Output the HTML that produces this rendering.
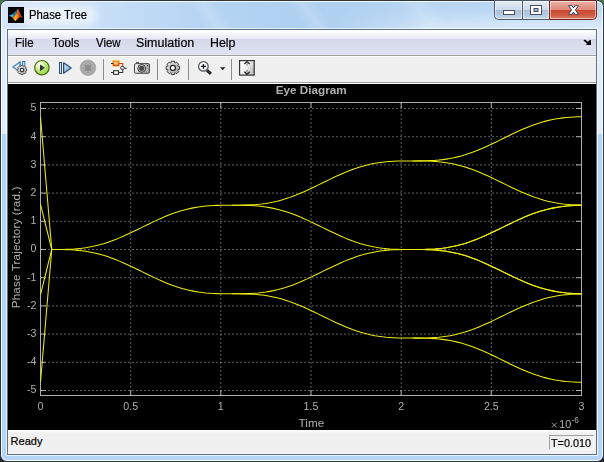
<!DOCTYPE html>
<html><head><meta charset="utf-8"><title>Phase Tree</title>
<style>
html,body{margin:0;padding:0;}
body{width:604px;height:462px;overflow:hidden;position:relative;background:linear-gradient(#44784d 0,#44784d 50%,#20262a 50%,#20262a 100%);font-family:"Liberation Sans",sans-serif;}
.abs{position:absolute;}
#title,.mi,#ready,#ttext{-webkit-text-stroke:0.2px #000;}
#win{left:0;top:0;width:604px;height:462px;box-sizing:border-box;border-radius:7px 7px 7px 7px;border:1px solid #2b3642;background:#b5d5f6;overflow:hidden;}
#hl{left:0;top:0;width:600px;height:458px;border:1px solid rgba(255,255,255,.85);border-radius:6px;}
#titlegrad{left:1px;top:1px;width:600px;height:28px;background:linear-gradient(to right,#d6e5f9 0,#cfe2f8 60px,#c6def7 110px,#b5d4f3 200px,#aed0f1 300px,#b2d3f2 420px,#b9d7f5 600px);}
#sideL{left:1px;top:28px;width:6px;height:105px;background:#e2edfb;}
#sideR{left:596px;top:28px;width:6px;height:105px;background:#e2edfb;}
.streak{background:linear-gradient(to right,rgba(255,255,255,0),rgba(255,255,255,.16),rgba(255,255,255,0));transform:skewX(35deg);top:0;height:30px;}
#inner{left:7px;top:29px;width:588px;height:424px;border:1px solid #5f6f82;background:#f0f0f0;}
#innerhl{left:6px;top:28px;width:590px;height:426px;border:1px solid rgba(255,255,255,.7);}
#title{left:28.8px;top:8px;transform:scaleX(.945);transform-origin:left;font-size:12px;line-height:14px;color:#000;white-space:nowrap;}
#menubar{left:8px;top:30px;width:588px;height:25px;background:linear-gradient(#ffffff 0,#f9fafd 3px,#eff1f8 6px,#e6e9f5 9px,#d5d9eb 9px,#d8dcec 16px,#dfe3f1 24px,#e4e8f7 25px);}
#menuline{left:8px;top:55px;width:588px;height:1px;background:#a0a0a0;}
#menuline2{left:8px;top:56px;width:588px;height:1px;background:#f6f6f6;}
.mi{top:36px;transform-origin:left;font-size:12px;line-height:14px;color:#000;white-space:nowrap;}
#toolbar{left:8px;top:56px;width:588px;height:26px;background:linear-gradient(#ffffff 0,#ffffff 1px,#f0f0f0 1px);}
#tbline{left:8px;top:82px;width:588px;height:1px;background:#a0a0a0;}
#tbline2{left:8px;top:83px;width:588px;height:1px;background:#ffffff;}
.sep{top:59px;width:1px;height:21px;background:#8c8c8c;}
#plot{left:8px;top:84px;width:588px;height:346px;background:#000;}
#status{left:8px;top:430px;width:588px;height:24px;background:linear-gradient(#fff 0,#fff 1px,#f6f6f6 2px,#f0f0f0 3px,#f0f0f0 22.5px,#f7f7f7 24px);}
#ready{left:10.6px;top:435px;font-size:11px;line-height:13px;color:#000;}
#tbox{left:549px;top:435px;width:43px;height:13px;border-top:1px solid #a0a0a0;border-left:1px solid #a0a0a0;border-right:1px solid #fff;border-bottom:1px solid #fff;}
#ttext{left:550.6px;top:437px;transform:scaleX(.985);transform-origin:left;font-size:11px;line-height:13px;color:#000;white-space:nowrap;}
svg text{font-family:"Liberation Sans",sans-serif;}
</style></head><body>
<div id="win" class="abs">
  <div id="titlegrad" class="abs"></div>
  <div class="abs streak" style="left:195px;width:30px;"></div>
  <div class="abs streak" style="left:295px;width:30px;"></div>
  <div class="abs streak" style="left:400px;width:45px;"></div>
  <div class="abs" style="left:330px;top:1px;width:272px;height:28px;background:linear-gradient(to bottom,rgba(255,255,255,.05) 0,rgba(255,255,255,.12) 9px,rgba(255,255,255,.5) 28px);-webkit-mask-image:linear-gradient(to right,transparent 0,#000 45%);mask-image:linear-gradient(to right,transparent 0,#000 45%);"></div>
  <div class="abs" style="left:20px;top:5px;width:76px;height:19px;border-radius:9px;background:rgba(255,255,255,.62);filter:blur(5px);"></div>
  <div id="sideL" class="abs"></div><div id="sideR" class="abs"></div>
  <div id="hl" class="abs"></div>
</div>
<div id="innerhl" class="abs"></div>
<div id="inner" class="abs"></div>

<!-- app icon -->
<svg class="abs" style="left:8px;top:7px" width="16" height="16" viewBox="0 0 16 16">
  <rect width="16" height="16" fill="#000"/>
  <path d="M1 8.5 L4.5 7 L7 8.8 L4 10.5 Z" fill="#3fa9d6"/>
  <path d="M4.5 7 L8.5 3.2 L10 1.5 L8.2 7 L7 8.8 Z" fill="#2c6f9c"/>
  <path d="M7 8.8 L8.2 7 L10 1.5 C11.2 4 12.5 8.5 14.5 11 C13 10 12 9.5 11 10.5 C10 11.8 8.5 13.5 7.5 13.8 L6 12.5 L4 10.5 Z" fill="#e8761c"/>
  <path d="M10 1.5 C11.2 4 12.5 8.5 14.5 11 C13 10 12 9.5 11 10.5 C10.8 8 10.3 5 10 1.5 Z" fill="#b5391a"/>
  <path d="M7 8.8 L8.2 7 L9 9.5 L7.5 13.8 L6 12.5 Z" fill="#f6b21a"/>
  <path d="M6.4 12.2 L7.5 13.8 L8.2 12.5 Z" fill="#f6e21a"/>
</svg>
<div id="title" class="abs">Phase Tree</div>

<!-- caption buttons -->
<svg class="abs" style="left:494px;top:0" width="104" height="21" viewBox="0 0 104 21">
  <defs>
    <linearGradient id="gb" x1="0" y1="0" x2="0" y2="1">
      <stop offset="0" stop-color="#e6edf6"/><stop offset="0.5" stop-color="#cbd9ea"/>
      <stop offset="0.5" stop-color="#a9bed8"/><stop offset="1" stop-color="#c6d6e9"/>
    </linearGradient>
    <linearGradient id="gr" x1="0" y1="0" x2="0" y2="1">
      <stop offset="0" stop-color="#f1b6aa"/><stop offset="0.48" stop-color="#de8878"/>
      <stop offset="0.48" stop-color="#c8482e"/><stop offset="0.78" stop-color="#cf5a42"/><stop offset="1" stop-color="#df8670"/>
    </linearGradient>
  </defs>
  <path d="M0.5 0.5 V15.5 Q0.5 19.5 4.5 19.5 H55.5 V0.5 Z" fill="url(#gb)" stroke="#4d5b6e"/>
  <path d="M55.5 0.5 V19.5 H98.5 Q102.5 19.5 102.5 15.5 V0.5 Z" fill="url(#gr)" stroke="#6e2a22"/>
  <path d="M1.5 1.5 V15.5 Q1.5 18.5 4.5 18.5 H27.5 V1.5 Z M29.5 1.5 V18.5 H54.5 V1.5Z M56.5 1.5 V18.5 H98.5 Q101.5 18.5 101.5 15.5 V1.5 Z" fill="none" stroke="rgba(255,255,255,.5)"/>
  <line x1="28.5" y1="1" x2="28.5" y2="19" stroke="#4d5b6e"/>
  <rect x="9.5" y="10.5" width="11" height="4" fill="#fff" stroke="#47505e"/>
  <rect x="36.5" y="5.5" width="11" height="9" fill="#fff" stroke="#47505e"/>
  <rect x="40" y="8.5" width="4" height="3" fill="#9db8d8" stroke="#47505e"/>
  <path d="M74.5 5.7 L78.0 5.7 L79.5 7.9 L81.0 5.7 L84.5 5.7 L81.4 10.0 L84.5 14.3 L81.0 14.3 L79.5 12.1 L78.0 14.3 L74.5 14.3 L77.6 10.0 Z" fill="#fff" stroke="#3a475a" stroke-width="1" stroke-linejoin="round"/>
</svg>

<div id="menubar" class="abs"></div><div id="menuline" class="abs"></div><div id="menuline2" class="abs"></div>
<div class="abs mi" style="left:15.3px;transform:scaleX(.96)">File</div>
<div class="abs mi" style="left:52px;transform:scaleX(.98)">Tools</div>
<div class="abs mi" style="left:96.3px;transform:scaleX(.95)">View</div>
<div class="abs mi" style="left:136px;transform:scaleX(1.04)">Simulation</div>
<div class="abs mi" style="left:210.2px;transform:scaleX(1.03)">Help</div>
<svg class="abs" style="left:583px;top:39px" width="9" height="7" viewBox="0 0 9 7"><path d="M0.5 1.5 L2 0.5 L5 3 L6 1.5 L8 1 L8 6 L3 6 L4 4.5 Z" fill="#000"/></svg>

<div id="toolbar" class="abs"></div><div id="tbline" class="abs"></div><div id="tbline2" class="abs"></div>
<div class="abs sep" style="left:103px"></div>
<div class="abs sep" style="left:157px"></div>
<div class="abs sep" style="left:188px"></div>
<div class="abs sep" style="left:231px"></div>

<!-- toolbar icons -->
<svg class="abs" style="left:8px;top:56px" width="260" height="26" viewBox="8 56 260 26">
  <defs>
    <radialGradient id="gplay" cx="0.3" cy="0.25" r="0.8"><stop offset="0" stop-color="#ffffff"/><stop offset="0.25" stop-color="#e4f6c4"/><stop offset="0.7" stop-color="#aee268"/><stop offset="1" stop-color="#98d848"/></radialGradient>
    <linearGradient id="gtri" x1="0" y1="0" x2="1" y2="0"><stop offset="0" stop-color="#161616"/><stop offset="1" stop-color="#5a5a5a"/></linearGradient>
    <linearGradient id="gblue" x1="0" y1="0" x2="0.6" y2="1"><stop offset="0" stop-color="#cfe6fa"/><stop offset="1" stop-color="#7fafdc"/></linearGradient>
    <linearGradient id="ggear" x1="0" y1="0" x2="0.7" y2="1"><stop offset="0" stop-color="#efefef"/><stop offset="1" stop-color="#a2a2a2"/></linearGradient>
    <linearGradient id="ggear2" x1="0" y1="0" x2="1" y2="1"><stop offset="0" stop-color="#f2f2f2"/><stop offset="1" stop-color="#9a9a9a"/></linearGradient>
    <linearGradient id="gpeach" x1="0" y1="0" x2="0" y2="1"><stop offset="0" stop-color="#fbe3b0"/><stop offset="1" stop-color="#f3a85a"/></linearGradient>
    <linearGradient id="gredbox" x1="0" y1="0" x2="0" y2="1"><stop offset="0" stop-color="#ee8a1e"/><stop offset="1" stop-color="#c8321a"/></linearGradient>
    <linearGradient id="gcam" x1="0" y1="0" x2="1" y2="0.3"><stop offset="0" stop-color="#f4f4f4"/><stop offset="0.45" stop-color="#dcdcdc"/><stop offset="1" stop-color="#a6a6a6"/></linearGradient>
    <linearGradient id="glens" x1="0" y1="0" x2="1" y2="1"><stop offset="0" stop-color="#ffffff"/><stop offset="0.5" stop-color="#fbfdff"/><stop offset="1" stop-color="#cfe2f4"/></linearGradient>
    <linearGradient id="gbox" x1="0" y1="0" x2="1" y2="0.6"><stop offset="0" stop-color="#ffffff"/><stop offset="0.45" stop-color="#f6f6f6"/><stop offset="1" stop-color="#c4c4c4"/></linearGradient>
  </defs>
  <!-- rewind + gear -->
  <path d="M12.9 67 L20.2 61.7 V72 Z" fill="#d6eafb" stroke="#4f86c0" stroke-width="1.4" stroke-linejoin="round"/>
  <rect x="22.6" y="61.5" width="2.2" height="7" fill="#d6eafb" stroke="#3670b0"/>
  <g transform="translate(22 70)">
    <path d="M-1.07 -3.86 L-0.94 -4.66 L0.94 -4.66 L1.07 -3.86 L1.97 -3.48 L2.62 -3.96 L3.96 -2.62 L3.48 -1.97 L3.86 -1.07 L4.66 -0.94 L4.66 0.94 L3.86 1.07 L3.48 1.97 L3.96 2.62 L2.62 3.96 L1.97 3.48 L1.07 3.86 L0.94 4.66 L-0.94 4.66 L-1.07 3.86 L-1.97 3.48 L-2.62 3.96 L-3.96 2.62 L-3.48 1.97 L-3.86 1.07 L-4.66 0.94 L-4.66 -0.94 L-3.86 -1.07 L-3.48 -1.97 L-3.96 -2.62 L-2.62 -3.96 L-1.97 -3.48 Z" fill="url(#ggear)" stroke="#505050" stroke-width="0.9" stroke-linejoin="round"/>
    <circle r="1.7" fill="#fff" stroke="#2a2a2a" stroke-width="1.1"/>
  </g>
  <!-- play -->
  <circle cx="41.9" cy="67.7" r="7.2" fill="url(#gplay)" stroke="#4b6c12" stroke-width="1.2"/>
  <path d="M40.1 64.4 L44.9 67.8 L40.1 71.2 Z" fill="url(#gtri)"/>
  <!-- step -->
  <rect x="59.5" y="62.5" width="2" height="11" fill="#d2e6f7" stroke="#2c4c74"/>
  <path d="M63.6 62.8 L71.2 68 L63.6 73.2 Z" fill="url(#gblue)" stroke="#2c4c74" stroke-width="1.2" stroke-linejoin="round"/>
  <!-- stop -->
  <circle cx="88" cy="67.7" r="7.8" fill="#a9a9a9" stroke="#9c9c9c" stroke-width="0.6"/>
  <rect x="85" y="64.8" width="6" height="6" fill="#8e8e8e"/>
  <!-- block diagram -->
  <rect x="112" y="60" width="8" height="6.8" rx="1.2" fill="#fbc65c"/>
  <rect x="113.6" y="61.6" width="4.9" height="3.7" fill="url(#gpeach)" stroke="url(#gredbox)" stroke-width="1.1"/>
  <path d="M111 63.5 H113.1 M111 72.5 H113.1 M124.4 68.2 H126.8" fill="none" stroke="#2a2a2a" stroke-width="1"/>
  <path d="M119 63.5 H122.7 V66.2" fill="none" stroke="#d23c1a" stroke-width="1.1"/>
  <path d="M119 72.5 H122.7 V69.6" fill="none" stroke="#333" stroke-width="1.1"/>
  <rect x="120.6" y="66.5" width="3.6" height="2.9" rx="1.3" fill="#fff" stroke="#333" stroke-width="1"/>
  <rect x="113.6" y="70.7" width="4.9" height="3.6" fill="#fbfbfb" stroke="#333" stroke-width="1.1"/>
  <!-- camera -->
  <path d="M136 62.6 H139" stroke="#555" stroke-width="1.2"/>
  <rect x="134.5" y="63.6" width="15" height="9.7" rx="1.4" fill="url(#gcam)" stroke="#484848" stroke-width="1"/>
  <circle cx="141.7" cy="68.4" r="3.9" fill="#d4d4d4" stroke="#3a3a3a" stroke-width="1"/>
  <circle cx="141.7" cy="68.4" r="2.3" fill="#4a4a4a" stroke="#2c2c2c" stroke-width="0.6"/>
  <rect x="146.9" y="64.9" width="1.2" height="1.2" fill="#333"/>
  <!-- gear -->
  <g transform="translate(172.9 67.9)">
    <path d="M-1.63 -5.25 L-1.64 -6.70 L1.64 -6.70 L1.63 -5.25 L2.57 -4.86 L3.58 -5.90 L5.90 -3.58 L4.86 -2.57 L5.25 -1.63 L6.70 -1.64 L6.70 1.64 L5.25 1.63 L4.86 2.57 L5.90 3.58 L3.58 5.90 L2.57 4.86 L1.63 5.25 L1.64 6.70 L-1.64 6.70 L-1.63 5.25 L-2.57 4.86 L-3.58 5.90 L-5.90 3.58 L-4.86 2.57 L-5.25 1.63 L-6.70 1.64 L-6.70 -1.64 L-5.25 -1.63 L-4.86 -2.57 L-5.90 -3.58 L-3.58 -5.90 L-2.57 -4.86 Z" fill="url(#ggear2)" stroke="#3c3c3c" stroke-width="1" stroke-linejoin="round"/>
    <circle r="2.5" fill="#fff" stroke="#262626" stroke-width="1.3"/>
  </g>
  <!-- zoom -->
  <path d="M207 70.4 L210.9 73.9" stroke="#262626" stroke-width="3.1" stroke-linecap="butt"/>
  <circle cx="203.4" cy="66.4" r="4.8" fill="url(#glens)" stroke="#555" stroke-width="1.2"/>
  <path d="M201 66.4 H205.9 M203.45 63.9 V68.8" stroke="#111" stroke-width="1.3"/>
  <path d="M220 67.3 H225.4 L222.7 70.2 Z" fill="#222"/>
  <!-- autoscale -->
  <rect x="239.6" y="60.6" width="14.6" height="14.5" fill="url(#gbox)" stroke="#323232" stroke-width="1.2"/>
  <path d="M247.05 63.2 V65.6 M247.05 70.1 V72.5" stroke="#8c8c8c" stroke-width="1.3"/>
  <path d="M244.4 64 L247.05 61.6 L249.7 64" fill="none" stroke="#2a2a2a" stroke-width="1.4"/>
  <path d="M244.4 71.8 L247.05 74.2 L249.7 71.8" fill="none" stroke="#2a2a2a" stroke-width="1.4"/>
</svg>

<div id="plot" class="abs"></div>
<svg class="abs" style="left:8px;top:84px;will-change:transform" width="588" height="346" viewBox="8 84 588 346">
  <g stroke="#a4a4a4" stroke-width="1" stroke-dasharray="1.15 2.85" stroke-dashoffset="0.55" fill="none">
<line x1="41" x2="581" y1="390.5" y2="390.5"/>
<line x1="41" x2="581" y1="362.3" y2="362.3"/>
<line x1="41" x2="581" y1="334.1" y2="334.1"/>
<line x1="41" x2="581" y1="305.9" y2="305.9"/>
<line x1="41" x2="581" y1="277.7" y2="277.7"/>
<line x1="41" x2="581" y1="249.5" y2="249.5"/>
<line x1="41" x2="581" y1="221.3" y2="221.3"/>
<line x1="41" x2="581" y1="193.1" y2="193.1"/>
<line x1="41" x2="581" y1="164.9" y2="164.9"/>
<line x1="41" x2="581" y1="136.7" y2="136.7"/>
<line x1="41" x2="581" y1="108.5" y2="108.5"/>
<line x1="130.7" x2="130.7" y1="103" y2="395"/>
<line x1="220.8" x2="220.8" y1="103" y2="395"/>
<line x1="311.0" x2="311.0" y1="103" y2="395"/>
<line x1="401.2" x2="401.2" y1="103" y2="395"/>
<line x1="491.3" x2="491.3" y1="103" y2="395"/>
  </g>
  <rect x="40.5" y="102.5" width="541" height="293" fill="none" stroke="#afafaf" stroke-width="1"/>
  <g stroke="#afafaf" stroke-width="1">
<line x1="41" x2="46" y1="390.5" y2="390.5"/>
<line x1="576" x2="581" y1="390.5" y2="390.5"/>
<line x1="41" x2="46" y1="362.3" y2="362.3"/>
<line x1="576" x2="581" y1="362.3" y2="362.3"/>
<line x1="41" x2="46" y1="334.1" y2="334.1"/>
<line x1="576" x2="581" y1="334.1" y2="334.1"/>
<line x1="41" x2="46" y1="305.9" y2="305.9"/>
<line x1="576" x2="581" y1="305.9" y2="305.9"/>
<line x1="41" x2="46" y1="277.7" y2="277.7"/>
<line x1="576" x2="581" y1="277.7" y2="277.7"/>
<line x1="41" x2="46" y1="249.5" y2="249.5"/>
<line x1="576" x2="581" y1="249.5" y2="249.5"/>
<line x1="41" x2="46" y1="221.3" y2="221.3"/>
<line x1="576" x2="581" y1="221.3" y2="221.3"/>
<line x1="41" x2="46" y1="193.1" y2="193.1"/>
<line x1="576" x2="581" y1="193.1" y2="193.1"/>
<line x1="41" x2="46" y1="164.9" y2="164.9"/>
<line x1="576" x2="581" y1="164.9" y2="164.9"/>
<line x1="41" x2="46" y1="136.7" y2="136.7"/>
<line x1="576" x2="581" y1="136.7" y2="136.7"/>
<line x1="41" x2="46" y1="108.5" y2="108.5"/>
<line x1="576" x2="581" y1="108.5" y2="108.5"/>
<line x1="130.7" x2="130.7" y1="103" y2="108"/>
<line x1="130.7" x2="130.7" y1="390" y2="395"/>
<line x1="220.8" x2="220.8" y1="103" y2="108"/>
<line x1="220.8" x2="220.8" y1="390" y2="395"/>
<line x1="311.0" x2="311.0" y1="103" y2="108"/>
<line x1="311.0" x2="311.0" y1="390" y2="395"/>
<line x1="401.2" x2="401.2" y1="103" y2="108"/>
<line x1="401.2" x2="401.2" y1="390" y2="395"/>
<line x1="491.3" x2="491.3" y1="103" y2="108"/>
<line x1="491.3" x2="491.3" y1="390" y2="395"/>
  </g>
  <g stroke="#ecec10" stroke-width="1.05" fill="none" stroke-linejoin="round">
<path d="M51.77 249.50 L55.53 249.50 L59.28 249.48 L63.04 249.43 L66.80 249.33 L70.56 249.18 L74.31 248.95 L78.07 248.63 L81.83 248.22 L85.58 247.71 L89.34 247.08 L93.10 246.34 L96.85 245.48 L100.61 244.49 L104.37 243.39 L108.12 242.17 L111.88 240.84 L115.64 239.40 L119.40 237.87 L123.15 236.26 L126.91 234.57 L130.67 232.82 L134.42 231.02 L138.18 229.19 L141.94 227.35 L145.69 225.51 L149.45 223.68 L153.21 221.89 L156.97 220.14 L160.72 218.45 L164.48 216.83 L168.24 215.30 L171.99 213.86 L175.75 212.53 L179.51 211.31 L183.26 210.21 L187.02 209.23 L190.78 208.37 L194.53 207.62 L198.29 207.00 L202.05 206.48 L205.81 206.07 L209.56 205.76 L213.32 205.53 L217.08 205.37 L220.83 205.27 L224.59 205.22 L228.35 205.21 L232.10 205.20"/>
<path d="M232.10 205.20 L235.86 205.20 L239.62 205.18 L243.38 205.13 L247.13 205.04 L250.89 204.88 L254.65 204.65 L258.40 204.34 L262.16 203.93 L265.92 203.41 L269.67 202.78 L273.43 202.04 L277.19 201.18 L280.94 200.20 L284.70 199.09 L288.46 197.87 L292.22 196.54 L295.97 195.11 L299.73 193.58 L303.49 191.96 L307.24 190.27 L311.00 188.52 L314.76 186.73 L318.51 184.90 L322.27 183.06 L326.03 181.21 L329.78 179.38 L333.54 177.59 L337.30 175.84 L341.06 174.15 L344.81 172.53 L348.57 171.00 L352.33 169.57 L356.08 168.24 L359.84 167.02 L363.60 165.91 L367.35 164.93 L371.11 164.07 L374.87 163.33 L378.62 162.70 L382.38 162.18 L386.14 161.77 L389.90 161.46 L393.65 161.23 L397.41 161.07 L401.17 160.98 L404.92 160.93 L408.68 160.91 L412.44 160.91"/>
<path d="M412.44 160.91 L416.19 160.90 L419.95 160.89 L423.71 160.84 L427.47 160.74 L431.22 160.58 L434.98 160.36 L438.74 160.04 L442.49 159.63 L446.25 159.11 L450.01 158.49 L453.76 157.75 L457.52 156.88 L461.28 155.90 L465.03 154.80 L468.79 153.58 L472.55 152.25 L476.31 150.81 L480.06 149.28 L483.82 147.66 L487.58 145.98 L491.33 144.23 L495.09 142.43 L498.85 140.60 L502.60 138.76 L506.36 136.92 L510.12 135.09 L513.88 133.29 L517.63 131.54 L521.39 129.85 L525.15 128.24 L528.90 126.71 L532.66 125.27 L536.42 123.94 L540.17 122.72 L543.93 121.62 L547.69 120.63 L551.44 119.77 L555.20 119.03 L558.96 118.40 L562.72 117.89 L566.47 117.48 L570.23 117.16 L573.99 116.93 L577.74 116.78 L581.50 116.68"/>
<path d="M412.44 160.91 L416.19 160.91 L419.95 160.93 L423.71 160.98 L427.47 161.07 L431.22 161.23 L434.98 161.46 L438.74 161.77 L442.49 162.18 L446.25 162.70 L450.01 163.33 L453.76 164.07 L457.52 164.93 L461.28 165.91 L465.03 167.02 L468.79 168.24 L472.55 169.57 L476.31 171.00 L480.06 172.53 L483.82 174.15 L487.58 175.84 L491.33 177.59 L495.09 179.38 L498.85 181.21 L502.60 183.06 L506.36 184.90 L510.12 186.73 L513.88 188.52 L517.63 190.27 L521.39 191.96 L525.15 193.58 L528.90 195.11 L532.66 196.54 L536.42 197.87 L540.17 199.09 L543.93 200.20 L547.69 201.18 L551.44 202.04 L555.20 202.78 L558.96 203.41 L562.72 203.93 L566.47 204.34 L570.23 204.65 L573.99 204.88 L577.74 205.04 L581.50 205.13"/>
<path d="M232.10 205.20 L235.86 205.21 L239.62 205.22 L243.38 205.27 L247.13 205.37 L250.89 205.53 L254.65 205.76 L258.40 206.07 L262.16 206.48 L265.92 207.00 L269.67 207.62 L273.43 208.37 L277.19 209.23 L280.94 210.21 L284.70 211.31 L288.46 212.53 L292.22 213.86 L295.97 215.30 L299.73 216.83 L303.49 218.45 L307.24 220.14 L311.00 221.89 L314.76 223.68 L318.51 225.51 L322.27 227.35 L326.03 229.19 L329.78 231.02 L333.54 232.82 L337.30 234.57 L341.06 236.26 L344.81 237.87 L348.57 239.40 L352.33 240.84 L356.08 242.17 L359.84 243.39 L363.60 244.49 L367.35 245.48 L371.11 246.34 L374.87 247.08 L378.62 247.71 L382.38 248.22 L386.14 248.63 L389.90 248.95 L393.65 249.18 L397.41 249.33 L401.17 249.43 L404.92 249.48 L408.68 249.50 L412.44 249.50"/>
<path d="M412.44 249.50 L416.19 249.50 L419.95 249.48 L423.71 249.43 L427.47 249.33 L431.22 249.18 L434.98 248.95 L438.74 248.63 L442.49 248.22 L446.25 247.71 L450.01 247.08 L453.76 246.34 L457.52 245.48 L461.28 244.49 L465.03 243.39 L468.79 242.17 L472.55 240.84 L476.31 239.40 L480.06 237.87 L483.82 236.26 L487.58 234.57 L491.33 232.82 L495.09 231.02 L498.85 229.19 L502.60 227.35 L506.36 225.51 L510.12 223.68 L513.88 221.89 L517.63 220.14 L521.39 218.45 L525.15 216.83 L528.90 215.30 L532.66 213.86 L536.42 212.53 L540.17 211.31 L543.93 210.21 L547.69 209.23 L551.44 208.37 L555.20 207.62 L558.96 207.00 L562.72 206.48 L566.47 206.07 L570.23 205.76 L573.99 205.53 L577.74 205.37 L581.50 205.27"/>
<path d="M412.44 249.50 L416.19 249.50 L419.95 249.52 L423.71 249.57 L427.47 249.67 L431.22 249.82 L434.98 250.05 L438.74 250.37 L442.49 250.78 L446.25 251.29 L450.01 251.92 L453.76 252.66 L457.52 253.52 L461.28 254.51 L465.03 255.61 L468.79 256.83 L472.55 258.16 L476.31 259.60 L480.06 261.13 L483.82 262.74 L487.58 264.43 L491.33 266.18 L495.09 267.98 L498.85 269.81 L502.60 271.65 L506.36 273.49 L510.12 275.32 L513.88 277.11 L517.63 278.86 L521.39 280.55 L525.15 282.17 L528.90 283.70 L532.66 285.14 L536.42 286.47 L540.17 287.69 L543.93 288.79 L547.69 289.77 L551.44 290.63 L555.20 291.38 L558.96 292.00 L562.72 292.52 L566.47 292.93 L570.23 293.24 L573.99 293.47 L577.74 293.63 L581.50 293.73"/>
<path d="M51.77 249.50 L55.53 249.50 L59.28 249.52 L63.04 249.57 L66.80 249.67 L70.56 249.82 L74.31 250.05 L78.07 250.37 L81.83 250.78 L85.58 251.29 L89.34 251.92 L93.10 252.66 L96.85 253.52 L100.61 254.51 L104.37 255.61 L108.12 256.83 L111.88 258.16 L115.64 259.60 L119.40 261.13 L123.15 262.74 L126.91 264.43 L130.67 266.18 L134.42 267.98 L138.18 269.81 L141.94 271.65 L145.69 273.49 L149.45 275.32 L153.21 277.11 L156.97 278.86 L160.72 280.55 L164.48 282.17 L168.24 283.70 L171.99 285.14 L175.75 286.47 L179.51 287.69 L183.26 288.79 L187.02 289.77 L190.78 290.63 L194.53 291.38 L198.29 292.00 L202.05 292.52 L205.81 292.93 L209.56 293.24 L213.32 293.47 L217.08 293.63 L220.83 293.73 L224.59 293.78 L228.35 293.79 L232.10 293.80"/>
<path d="M232.10 293.80 L235.86 293.79 L239.62 293.78 L243.38 293.73 L247.13 293.63 L250.89 293.47 L254.65 293.24 L258.40 292.93 L262.16 292.52 L265.92 292.00 L269.67 291.38 L273.43 290.63 L277.19 289.77 L280.94 288.79 L284.70 287.69 L288.46 286.47 L292.22 285.14 L295.97 283.70 L299.73 282.17 L303.49 280.55 L307.24 278.86 L311.00 277.11 L314.76 275.32 L318.51 273.49 L322.27 271.65 L326.03 269.81 L329.78 267.98 L333.54 266.18 L337.30 264.43 L341.06 262.74 L344.81 261.13 L348.57 259.60 L352.33 258.16 L356.08 256.83 L359.84 255.61 L363.60 254.51 L367.35 253.52 L371.11 252.66 L374.87 251.92 L378.62 251.29 L382.38 250.78 L386.14 250.37 L389.90 250.05 L393.65 249.82 L397.41 249.67 L401.17 249.57 L404.92 249.52 L408.68 249.50 L412.44 249.50"/>
<path d="M412.44 249.50 L416.19 249.50 L419.95 249.48 L423.71 249.43 L427.47 249.33 L431.22 249.18 L434.98 248.95 L438.74 248.63 L442.49 248.22 L446.25 247.71 L450.01 247.08 L453.76 246.34 L457.52 245.48 L461.28 244.49 L465.03 243.39 L468.79 242.17 L472.55 240.84 L476.31 239.40 L480.06 237.87 L483.82 236.26 L487.58 234.57 L491.33 232.82 L495.09 231.02 L498.85 229.19 L502.60 227.35 L506.36 225.51 L510.12 223.68 L513.88 221.89 L517.63 220.14 L521.39 218.45 L525.15 216.83 L528.90 215.30 L532.66 213.86 L536.42 212.53 L540.17 211.31 L543.93 210.21 L547.69 209.23 L551.44 208.37 L555.20 207.62 L558.96 207.00 L562.72 206.48 L566.47 206.07 L570.23 205.76 L573.99 205.53 L577.74 205.37 L581.50 205.27"/>
<path d="M412.44 249.50 L416.19 249.50 L419.95 249.52 L423.71 249.57 L427.47 249.67 L431.22 249.82 L434.98 250.05 L438.74 250.37 L442.49 250.78 L446.25 251.29 L450.01 251.92 L453.76 252.66 L457.52 253.52 L461.28 254.51 L465.03 255.61 L468.79 256.83 L472.55 258.16 L476.31 259.60 L480.06 261.13 L483.82 262.74 L487.58 264.43 L491.33 266.18 L495.09 267.98 L498.85 269.81 L502.60 271.65 L506.36 273.49 L510.12 275.32 L513.88 277.11 L517.63 278.86 L521.39 280.55 L525.15 282.17 L528.90 283.70 L532.66 285.14 L536.42 286.47 L540.17 287.69 L543.93 288.79 L547.69 289.77 L551.44 290.63 L555.20 291.38 L558.96 292.00 L562.72 292.52 L566.47 292.93 L570.23 293.24 L573.99 293.47 L577.74 293.63 L581.50 293.73"/>
<path d="M232.10 293.80 L235.86 293.80 L239.62 293.82 L243.38 293.87 L247.13 293.96 L250.89 294.12 L254.65 294.35 L258.40 294.66 L262.16 295.07 L265.92 295.59 L269.67 296.22 L273.43 296.96 L277.19 297.82 L280.94 298.80 L284.70 299.91 L288.46 301.13 L292.22 302.46 L295.97 303.89 L299.73 305.42 L303.49 307.04 L307.24 308.73 L311.00 310.48 L314.76 312.27 L318.51 314.10 L322.27 315.94 L326.03 317.79 L329.78 319.62 L333.54 321.41 L337.30 323.16 L341.06 324.85 L344.81 326.47 L348.57 328.00 L352.33 329.43 L356.08 330.76 L359.84 331.98 L363.60 333.09 L367.35 334.07 L371.11 334.93 L374.87 335.67 L378.62 336.30 L382.38 336.82 L386.14 337.23 L389.90 337.54 L393.65 337.77 L397.41 337.93 L401.17 338.02 L404.92 338.07 L408.68 338.09 L412.44 338.09"/>
<path d="M412.44 338.09 L416.19 338.09 L419.95 338.07 L423.71 338.02 L427.47 337.93 L431.22 337.77 L434.98 337.54 L438.74 337.23 L442.49 336.82 L446.25 336.30 L450.01 335.67 L453.76 334.93 L457.52 334.07 L461.28 333.09 L465.03 331.98 L468.79 330.76 L472.55 329.43 L476.31 328.00 L480.06 326.47 L483.82 324.85 L487.58 323.16 L491.33 321.41 L495.09 319.62 L498.85 317.79 L502.60 315.94 L506.36 314.10 L510.12 312.27 L513.88 310.48 L517.63 308.73 L521.39 307.04 L525.15 305.42 L528.90 303.89 L532.66 302.46 L536.42 301.13 L540.17 299.91 L543.93 298.80 L547.69 297.82 L551.44 296.96 L555.20 296.22 L558.96 295.59 L562.72 295.07 L566.47 294.66 L570.23 294.35 L573.99 294.12 L577.74 293.96 L581.50 293.87"/>
<path d="M412.44 338.09 L416.19 338.10 L419.95 338.11 L423.71 338.16 L427.47 338.26 L431.22 338.42 L434.98 338.64 L438.74 338.96 L442.49 339.37 L446.25 339.89 L450.01 340.51 L453.76 341.25 L457.52 342.12 L461.28 343.10 L465.03 344.20 L468.79 345.42 L472.55 346.75 L476.31 348.19 L480.06 349.72 L483.82 351.34 L487.58 353.02 L491.33 354.77 L495.09 356.57 L498.85 358.40 L502.60 360.24 L506.36 362.08 L510.12 363.91 L513.88 365.71 L517.63 367.46 L521.39 369.15 L525.15 370.76 L528.90 372.29 L532.66 373.73 L536.42 375.06 L540.17 376.28 L543.93 377.38 L547.69 378.37 L551.44 379.23 L555.20 379.97 L558.96 380.60 L562.72 381.11 L566.47 381.52 L570.23 381.84 L573.99 382.07 L577.74 382.22 L581.50 382.32"/>
<path d="M40.50 382.04 L51.77 249.50"/>
<path d="M40.50 294.62 L51.77 249.50"/>
<path d="M40.50 204.38 L51.77 249.50"/>
<path d="M40.50 116.96 L51.77 249.50"/>
  </g>
  <g fill="#afafaf" font-size="10.67px">
<text x="36.5" y="393.3" text-anchor="end">-5</text>
<text x="36.5" y="365.1" text-anchor="end">-4</text>
<text x="36.5" y="336.9" text-anchor="end">-3</text>
<text x="36.5" y="308.7" text-anchor="end">-2</text>
<text x="36.5" y="280.5" text-anchor="end">-1</text>
<text x="36.5" y="252.3" text-anchor="end">0</text>
<text x="36.5" y="224.1" text-anchor="end">1</text>
<text x="36.5" y="195.9" text-anchor="end">2</text>
<text x="36.5" y="167.7" text-anchor="end">3</text>
<text x="36.5" y="139.5" text-anchor="end">4</text>
<text x="36.5" y="111.3" text-anchor="end">5</text>
<text x="40.5" y="410" text-anchor="middle">0</text>
<text x="130.7" y="410" text-anchor="middle">0.5</text>
<text x="220.8" y="410" text-anchor="middle">1</text>
<text x="311.0" y="410" text-anchor="middle">1.5</text>
<text x="401.2" y="410" text-anchor="middle">2</text>
<text x="491.3" y="410" text-anchor="middle">2.5</text>
<text x="581.5" y="410" text-anchor="middle">3</text>
  </g>
  <text x="311.2" y="93.7" text-anchor="middle" font-size="11.73px" font-weight="bold" fill="#afafaf">Eye Diagram</text>
  <text x="311.4" y="426.8" text-anchor="middle" font-size="11.73px" fill="#afafaf">Time</text>
  <text transform="translate(20.2 247.4) rotate(-90)" text-anchor="middle" font-size="11.73px" fill="#afafaf" textLength="121.6" lengthAdjust="spacing">Phase Trajectory (rad.)</text>
  <g fill="#afafaf">
    <path d="M551.8 422.6 L556.8 427.6 M556.8 422.6 L551.8 427.6" stroke="#afafaf" stroke-width="0.9" fill="none"/>
    <text x="559.3" y="427.9" font-size="10.67px">10</text>
    <text x="571.5" y="422.8" font-size="8.3px">-6</text>
  </g>
</svg>

<div id="status" class="abs"></div>
<div id="ready" class="abs">Ready</div>
<div id="tbox" class="abs"></div>
<div id="ttext" class="abs">T=0.010</div>
</body></html>
